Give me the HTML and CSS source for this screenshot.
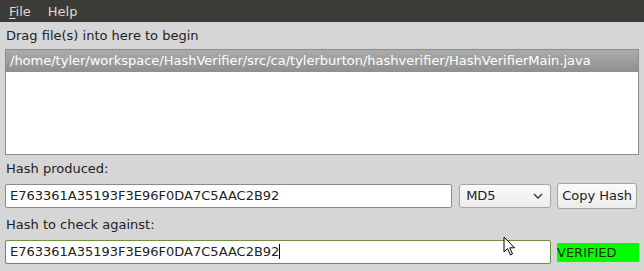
FILE: index.html
```html
<!DOCTYPE html>
<html>
<head>
<meta charset="utf-8">
<link rel="stylesheet" href="styles.css">
</head>
<body>
<div class="menubar">
  <span class="menu"><u>F</u>ile</span>
  <span class="menu">Help</span>
</div>
<div class="content">
  <div class="label first">Drag file(s) into here to begin</div>
  <div class="list">
    <div class="row selected">/home/tyler/workspace/HashVerifier/src/ca/tylerburton/hashverifier/HashVerifierMain.java</div>
  </div>
  <div class="label">Hash produced:</div>
  <div class="line">
    <div class="field grow">E763361A35193F3E96F0DA7C5AAC2B92</div>
    <div class="combo">MD5
      <svg class="chev" width="12" height="8" viewBox="0 0 12 8"><path d="M2 2 L6 6 L10 2" fill="none" stroke="#3a3a3a" stroke-width="1.4"/></svg>
    </div>
    <div class="button">Copy Hash</div>
  </div>
  <div class="label second-label">Hash to check against:</div>
  <div class="line">
    <div class="field grow green">E763361A35193F3E96F0DA7C5AAC2B92<span class="caret"></span></div>
    <div class="verified">VERIFIED</div>
  </div>
</div>
<svg class="pointer" width="14" height="22" viewBox="0 0 14 22"><path d="M1 1 L1 16 L4.5 12.5 L7.5 19 L9.5 18 L6.8 11.8 L11.5 11.8 Z" fill="#fff" stroke="#000" stroke-width="1"/></svg>
</body>
</html>
```
FILE: styles.css
```css
html, body {
  margin: 0;
  padding: 0;
  background: #d6d6d6;
  font-family: "DejaVu Sans", sans-serif;
  font-size: 13px;
  color: #222;
  width: 644px;
  height: 271px;
  overflow: hidden;
  position: relative;
}
.menubar {
  height: 22px;
  background: #3c3b37;
  color: #dfdbd2;
  display: flex;
  align-items: center;
  padding-left: 9px;
  gap: 17px;
  font-size: 13px;
}
.menubar u { text-decoration: underline; text-underline-offset: 2px; }
.content {
  padding: 0 5px 0 5px;
}
.label {
  height: 16px;
  line-height: 16px;
  padding-left: 1px;
  margin-top: 6px;
  margin-bottom: 6px;
  color: #222;
}
.label.first { margin-top: 6px; margin-bottom: 5px; }
.label.second-label { margin-top: 8px; margin-bottom: 6px; }
.list {
  height: 104px;
  background: #fff;
  border: 1px solid #8c8c8c;
}
.row {
  height: 22px;
  line-height: 22px;
  padding-left: 4px;
  white-space: nowrap;
  overflow: hidden;
}
.row.selected {
  background: linear-gradient(#ababab, #8f8f8f);
  color: #fff;
}
.line {
  display: flex;
  align-items: center;
  gap: 6px;
  height: 26px;
}
.field {
  height: 22px;
  line-height: 22px;
  background: #fff;
  border: 1px solid #8b8b8b;
  border-radius: 2px;
  padding-left: 4px;
  white-space: nowrap;
}
.grow { flex: 1; }
.field.green { border-color: #6f8f3f; }
.caret {
  display: inline-block;
  width: 1px;
  height: 15px;
  background: #000;
  vertical-align: -3px;
}
.combo {
  width: 80px;
  height: 22px;
  line-height: 22px;
  padding-left: 6px;
  padding-right: 4px;
  border: 1px solid #a4a4a4;
  border-radius: 3px;
  background: linear-gradient(#fafafa, #ececec);
  display: flex;
  justify-content: space-between;
  align-items: center;
  margin-left: 1px;
}
.chev { margin-right: 2px; }
.button {
  height: 24px;
  line-height: 24px;
  padding: 0 4px;
  border: 1px solid #a4a4a4;
  border-radius: 3px;
  background: linear-gradient(#fafafa, #ececec);
  white-space: nowrap;
  margin-right: 2px;
}
.verified {
  width: 82px;
  height: 19px;
  line-height: 19px;
  background: #00ff00;
  color: #1a2a0a;
}
.pointer {
  position: absolute;
  left: 503px;
  top: 236px;
}
```
